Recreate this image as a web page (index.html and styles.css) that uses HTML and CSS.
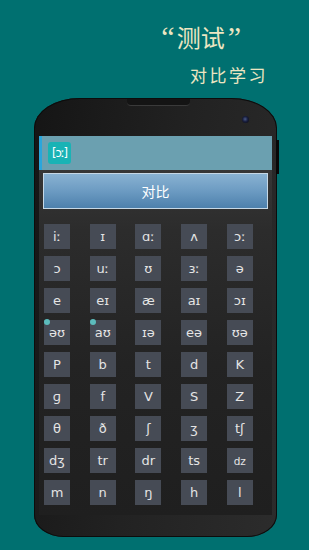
FILE: index.html
```html
<!DOCTYPE html>
<html lang="zh">
<head>
<meta charset="utf-8">
<title>测试</title>
<link rel="stylesheet" href="styles.css">
</head>
<body>
<div class="header">
  <div class="title"><span class="q ql">“</span>测试<span class="q qr">”</span></div>
  <div class="sub">对比学习</div>
</div>
<div class="phone">
  <div class="side-btn"></div>
  <div class="bezel-top">
    <div class="speaker"></div>
    <div class="camera"></div>
  </div>
  <div class="screen">
    <div class="actionbar">
      <div class="app-icon">[ɔː]</div>
    </div>
    <div class="content">
      <div class="compare-btn">对比</div>
      <div class="grid">
        <div class="cell">iː</div><div class="cell">ɪ</div><div class="cell">ɑː</div><div class="cell">ʌ</div><div class="cell">ɔː</div>
        <div class="cell">ɔ</div><div class="cell">uː</div><div class="cell">ʊ</div><div class="cell">ɜː</div><div class="cell">ə</div>
        <div class="cell">e</div><div class="cell">eɪ</div><div class="cell">æ</div><div class="cell">aɪ</div><div class="cell">ɔɪ</div>
        <div class="cell dot">əʊ</div><div class="cell dot">aʊ</div><div class="cell">ɪə</div><div class="cell">eə</div><div class="cell">ʊə</div>
        <div class="cell">P</div><div class="cell">b</div><div class="cell">t</div><div class="cell">d</div><div class="cell">K</div>
        <div class="cell">ɡ</div><div class="cell">f</div><div class="cell">V</div><div class="cell">S</div><div class="cell">Z</div>
        <div class="cell">θ</div><div class="cell">ð</div><div class="cell">ʃ</div><div class="cell">ʒ</div><div class="cell">tʃ</div>
        <div class="cell">dʒ</div><div class="cell">tr</div><div class="cell">dr</div><div class="cell">ts</div><div class="cell small">dz</div>
        <div class="cell">m</div><div class="cell">n</div><div class="cell">ŋ</div><div class="cell">h</div><div class="cell">l</div>
      </div>
    </div>
  </div>
  <div class="bezel-bottom"></div>
</div>
</body>
</html>
```
FILE: styles.css
```css
html, body {
  margin: 0;
  padding: 0;
}
body {
  width: 309px;
  height: 550px;
  overflow: hidden;
  background: #007070;
  font-family: "Noto Sans CJK SC", "Noto Sans", sans-serif;
}
.header {
  padding-top: 23px;
  color: #ece6c2;
  display: flex;
  flex-direction: column;
  align-items: flex-end;
}
.title {
  height: 28px;
  line-height: 28px;
  font-size: 24px;
  padding-right: 68px;
  white-space: nowrap;
}
.title .q {
  font-family: "Liberation Serif", serif;
  font-size: 30px;
}
.title .ql {
  margin-right: 2px;
}
.title .qr {
  margin-left: 3px;
}
.sub {
  margin-top: 14px;
  height: 20px;
  line-height: 20px;
  font-size: 17px;
  letter-spacing: 2.5px;
  padding-right: 41px;
}
.phone {
  position: relative;
  margin-top: 13px;
  margin-left: 34px;
  width: 243px;
  height: 439px;
  border-radius: 46px 46px 30px 30px / 30px 30px 22px 22px;
  background: linear-gradient(100deg, #151515 0%, #222 50%, #2c2c2c 100%);
  box-shadow: inset 0 0 0 1px #0c0c0c;
  display: flex;
  flex-direction: column;
}
.side-btn {
  position: absolute;
  right: -2px;
  top: 42px;
  width: 3px;
  height: 34px;
  background: #080808;
}
.bezel-top {
  position: relative;
  height: 38px;
  display: flex;
  justify-content: center;
}
.speaker {
  margin-left: 6px;
  width: 63px;
  height: 6px;
  margin-top: 1px;
  background: #141414;
  border-bottom: 1px solid #3a3a3a;
  border-radius: 0 0 4px 4px;
}
.camera {
  position: absolute;
  left: 208px;
  top: 18px;
  width: 7px;
  height: 7px;
  border-radius: 50%;
  background: radial-gradient(circle at 45% 45%, #4a5a88 0%, #1a2040 45%, #06060c 100%);
}
.screen {
  margin: 0 5px;
  height: 379px;
  display: flex;
  flex-direction: column;
  background: linear-gradient(180deg, #3c3c3c 0%, #2c2c2c 25%, #232323 60%, #1f1f1f 100%);
}
.actionbar {
  height: 34px;
  flex: none;
  background: #6ba0b0;
  border-left: 3px solid #2aa6dc;
  display: flex;
  align-items: center;
  padding-left: 6px;
}
.app-icon {
  width: 23px;
  height: 22px;
  border-radius: 3px;
  background: #19b3b5;
  color: #fff;
  font-family: "DejaVu Sans", sans-serif;
  font-size: 11.5px;
  letter-spacing: -1px;
  display: flex;
  align-items: center;
  justify-content: center;
}
.content {
  padding: 3px 4px 0 4px;
}
.compare-btn {
  height: 34px;
  border: 1px solid #c6d8e6;
  background: linear-gradient(180deg, #89b2d2 0%, #6c9bc2 50%, #4d80ac 100%);
  color: #fff;
  font-size: 14px;
  display: flex;
  align-items: center;
  justify-content: center;
}
.grid {
  margin-top: 15px;
  margin-left: 1px;
  display: grid;
  grid-template-columns: repeat(5, 26px);
  grid-auto-rows: 25px;
  column-gap: 19.7px;
  row-gap: 7px;
}
.cell {
  position: relative;
  background: #464b55;
  color: #e4e4e4;
  font-family: "DejaVu Sans", sans-serif;
  font-size: 13px;
  display: flex;
  align-items: center;
  justify-content: center;
}
.cell.small {
  font-size: 10.5px;
}
.cell.dot::before {
  content: "";
  position: absolute;
  left: 0;
  top: -1px;
  width: 6px;
  height: 6px;
  border-radius: 50%;
  background: #5cbcbc;
}
.bezel-bottom {
  flex: 1;
}
```
